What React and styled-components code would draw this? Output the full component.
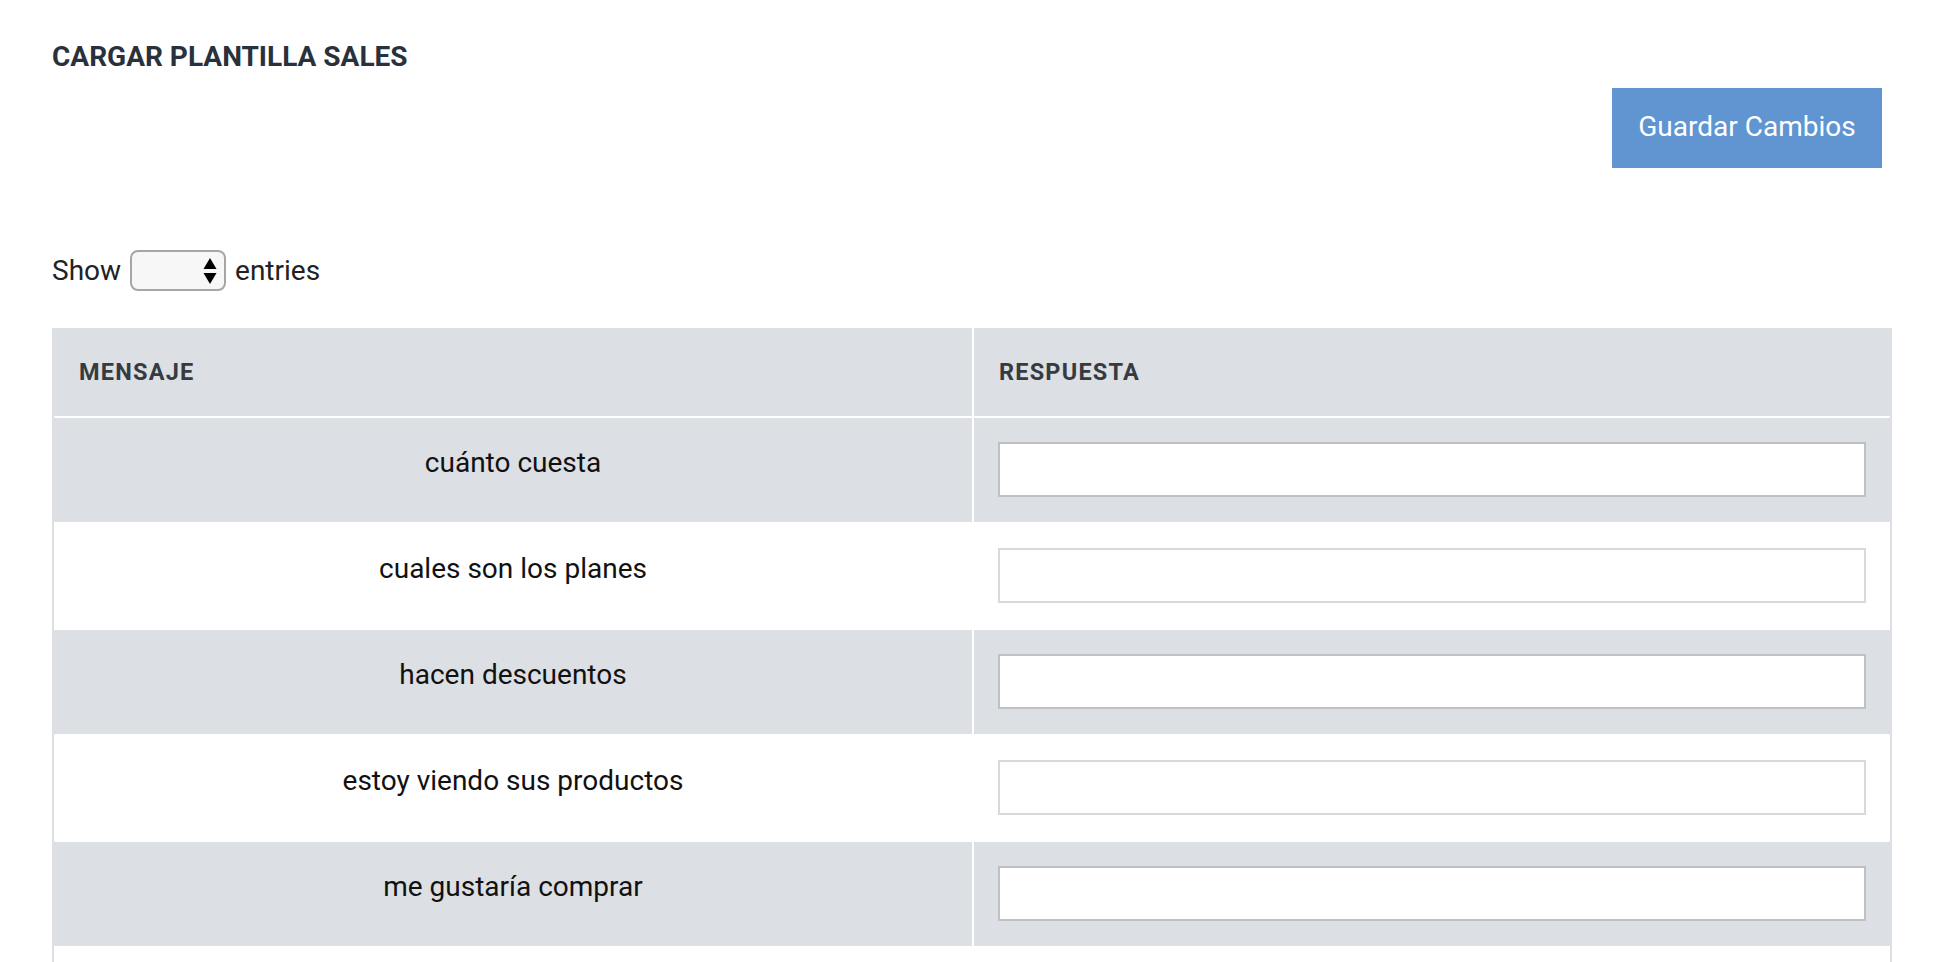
import React from "react";
import styled, { createGlobalStyle } from "styled-components";

const GlobalStyle = createGlobalStyle`
    html, body {
        margin: 0;
        padding: 0;
        background: #ffffff;
        font-family: Roboto, "Liberation Sans", sans-serif;
        color: #111111;
    }
`;

const Page = styled.div`
    display: flex;
    flex-direction: column;
    padding: 43px 52px 0 52px;
`;
const Title = styled.h1`
    margin: 0;
    font-size: 28px;
    line-height: 28px;
    font-weight: 700;
    color: #29323c;
`;
const ButtonRow = styled.div`
    display: flex;
    justify-content: flex-end;
    margin-top: 17px;
    padding-right: 10px;
`;
const SaveButton = styled.button`
    width: 270px;
    height: 80px;
    padding: 0 0 4px 0;
    border: none;
    background-color: #6195d1;
    color: #ffffff;
    font-family: Roboto, "Liberation Sans", sans-serif;
    font-size: 28px;
    cursor: pointer;
`;
const LengthRow = styled.div`
    display: flex;
    align-items: center;
    gap: 9px;
    margin-top: 82px;
    font-size: 28px;
    color: #222222;
    line-height: 41px;
`;
const SelectWrap = styled.div`
    position: relative;
    width: 96px;
    height: 41px;
`;
const Select = styled.select`
    display: block;
    appearance: none;
    margin: 0;
    width: 100%;
    height: 100%;
    box-sizing: border-box;
    border: 2px solid #a6a6a6;
    border-radius: 8px;
    background: #f7f7f7;
`;
const Arrows = styled.svg`
    position: absolute;
    top: 8px;
    right: 9px;
    pointer-events: none;
`;
const Table = styled.div`
    display: flex;
    flex-direction: column;
    margin-top: 37px;
    border-left: 2px solid #dcdfe3;
    border-right: 2px solid #dcdfe3;
`;
const Row = styled.div`
    display: grid;
    grid-template-columns: 918px 1fr;
    column-gap: 2px;
    border-bottom: 2px solid #ffffff;
    background: #ffffff;
`;
const HeadCell = styled.div`
    display: flex;
    align-items: center;
    height: 88px;
    padding-left: 25px;
    background: #dcdfe3;
    font-size: 23.5px;
    font-weight: 700;
    letter-spacing: 1.2px;
    color: #363b41;
`;
const TextCell = styled.div`
    height: 104px;
    box-sizing: border-box;
    padding-top: 25px;
    text-align: center;
    font-size: 28px;
    line-height: 39px;
    color: #111111;
    background: ${(p) => (p.$shaded ? "#dcdfe3" : "#ffffff")};
`;
const InputCell = styled.div`
    height: 104px;
    box-sizing: border-box;
    padding: 24px 24px 0 24px;
    background: ${(p) => (p.$shaded ? "#dcdfe3" : "#ffffff")};
`;
const Answer = styled.input`
    display: block;
    width: 100%;
    height: 55px;
    box-sizing: border-box;
    border: 2px solid ${(p) => (p.$shaded ? "#bec1c4" : "#d9d9d9")};
    background: #ffffff;
    font-family: Roboto, "Liberation Sans", sans-serif;
    font-size: 24px;
    padding: 0 10px;
`;

const mensajes = [
    "cuánto cuesta",
    "cuales son los planes",
    "hacen descuentos",
    "estoy viendo sus productos",
    "me gustaría comprar",
];

const App = () => {
    return (
        <>
            <GlobalStyle />
            <Page>
                <Title>CARGAR PLANTILLA SALES</Title>
                <ButtonRow>
                    <SaveButton>Guardar Cambios</SaveButton>
                </ButtonRow>
                <LengthRow>
                    <span>Show</span>
                    <SelectWrap>
                        <Select />
                        <Arrows width="14" height="26" viewBox="0 0 14 26">
                            <polygon points="7,0 13.5,11 0.5,11" fill="#000" />
                            <polygon points="0.5,15 13.5,15 7,26" fill="#000" />
                        </Arrows>
                    </SelectWrap>
                    <span>entries</span>
                </LengthRow>
                <Table>
                    <Row>
                        <HeadCell>MENSAJE</HeadCell>
                        <HeadCell>RESPUESTA</HeadCell>
                    </Row>
                    {mensajes.map((m, i) => (
                        <Row key={m}>
                            <TextCell $shaded={i % 2 === 0}>{m}</TextCell>
                            <InputCell $shaded={i % 2 === 0}>
                                <Answer $shaded={i % 2 === 0} />
                            </InputCell>
                        </Row>
                    ))}
                    <Row>
                        <TextCell />
                        <InputCell />
                    </Row>
                </Table>
            </Page>
        </>
    );
};

export default App;
